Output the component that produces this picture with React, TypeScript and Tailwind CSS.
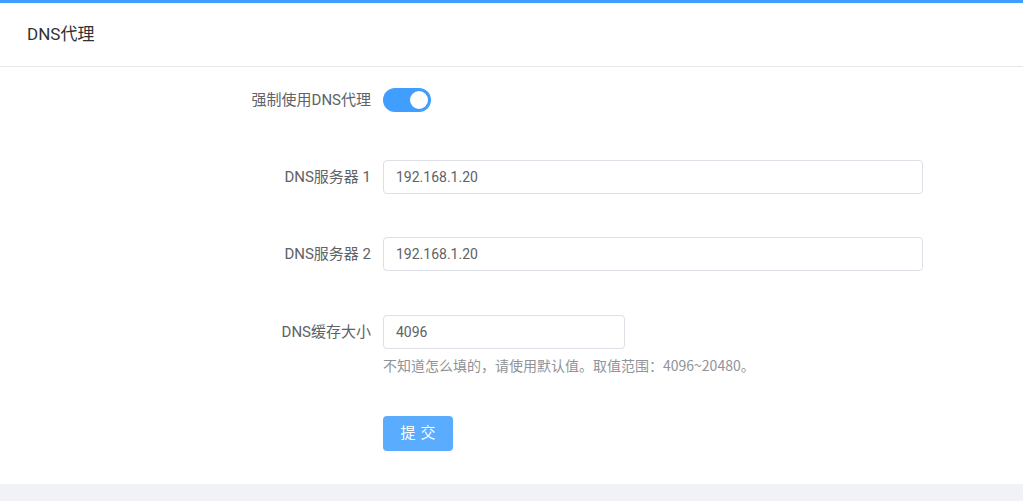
export default function App() {
  const font = { fontFamily: '"Roboto","Noto Sans CJK SC",sans-serif' };
  const cjk = { fontFamily: '"Noto Sans CJK SC","Roboto",sans-serif' };
  const Row = ({ label, children, h = 34 }: { label: string; children: React.ReactNode; h?: number }) => (
    <div className="flex items-start">
      <div className="w-[383px] shrink-0 pr-3 text-right text-[15px] text-[#606266]" style={{ lineHeight: h + 'px' }}>{label}</div>
      <div>{children}</div>
    </div>
  );
  return (
    <div className="w-[1023px] h-[501px] bg-[#f0f2f5] flex flex-col overflow-hidden" style={font}>
      <div className="h-[3px] bg-[#409eff]" />
      <div className="bg-white h-[481px] flex flex-col">
        <div className="h-[64px] border-b border-[#e8e8e8] flex items-center pl-[27px] text-[17px] text-[#303133]">DNS代理</div>
        <div className="flex flex-col pt-[21px]">
          <Row label="强制使用DNS代理" h={24}>
            <div className="w-[48px] h-[24px] rounded-full bg-[#409eff] relative">
              <div className="absolute right-[3px] top-[3px] w-[18px] h-[18px] rounded-full bg-white" />
            </div>
          </Row>
          <div className="h-[48px]" />
          <Row label="DNS服务器 1">
            <div className="w-[540px] h-[34px] border border-[#dcdfe6] rounded px-3 flex items-center text-[14px] text-[#606266]">192.168.1.20</div>
          </Row>
          <div className="h-[43px]" />
          <Row label="DNS服务器 2">
            <div className="w-[540px] h-[34px] border border-[#dcdfe6] rounded px-3 flex items-center text-[14px] text-[#606266]">192.168.1.20</div>
          </Row>
          <div className="h-[44px]" />
          <Row label="DNS缓存大小">
            <div className="w-[242px] h-[34px] border border-[#dcdfe6] rounded px-3 flex items-center text-[14px] text-[#606266]">4096</div>
            <div className="mt-[6px] text-[14px] text-[#909399]" style={cjk}>不知道怎么填的，请使用默认值。取值范围：4096~20480。</div>
          </Row>
          <div className="h-[40px]" />
          <div className="pl-[383px]">
            <button className="w-[70px] h-[35px] rounded bg-[#5aacff] text-white text-[15px] tracking-[5px] pl-[5px]">提交</button>
          </div>
        </div>
      </div>
    </div>
  );
}
